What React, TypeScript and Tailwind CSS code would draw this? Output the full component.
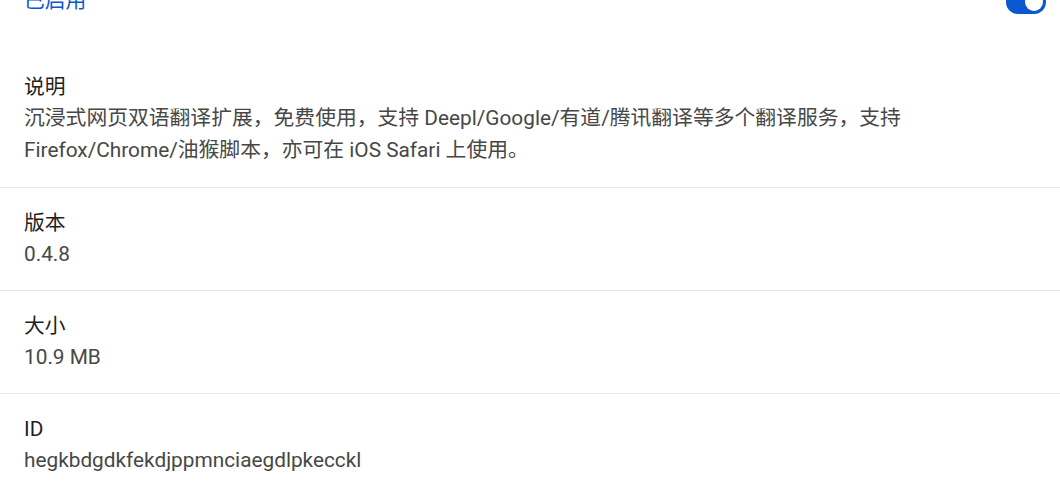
import React from "react";

const font = { fontFamily: '"Roboto", "Noto Sans CJK SC", sans-serif' };

function Section({ label, value, first }: { label: string; value: React.ReactNode; first?: boolean }) {
  return (
    <div className={first ? "pt-[0px] pb-[21px] pl-[24px] pr-[130px]" : "border-t border-[#e7e7e7] pt-[20px] pb-[20px] pl-[24px] pr-[130px]"}>
      <div className="text-[20.8px] leading-[30px] text-[#1f1f1f]">{label}</div>
      <div className="text-[20.8px] leading-[32px] text-[#474747]">{value}</div>
    </div>
  );
}

export default function App() {
  return (
    <div className="w-[1060px] h-[492px] overflow-hidden bg-white" style={font}>
      <div className="-mt-[22px] h-[48px] flex items-center justify-between pl-[24px] pr-[14px]">
        <span className="text-[20.8px] text-[#0b57d0]">已启用</span>
        <div className="w-[40px] h-[24px] rounded-full bg-[#0b57d0] flex items-center justify-end pr-[3px]">
          <div className="w-[18px] h-[18px] rounded-full bg-white" />
        </div>
      </div>
      <div className="h-[46px]" />
      <Section
        first
        label="说明"
        value="沉浸式网页双语翻译扩展，免费使用，支持 Deepl/Google/有道/腾讯翻译等多个翻译服务，支持 Firefox/Chrome/油猴脚本，亦可在 iOS Safari 上使用。"
      />
      <Section label="版本" value="0.4.8" />
      <Section label="大小" value="10.9 MB" />
      <Section label="ID" value="hegkbdgdkfekdjppmnciaegdlpkecckl" />
    </div>
  );
}
